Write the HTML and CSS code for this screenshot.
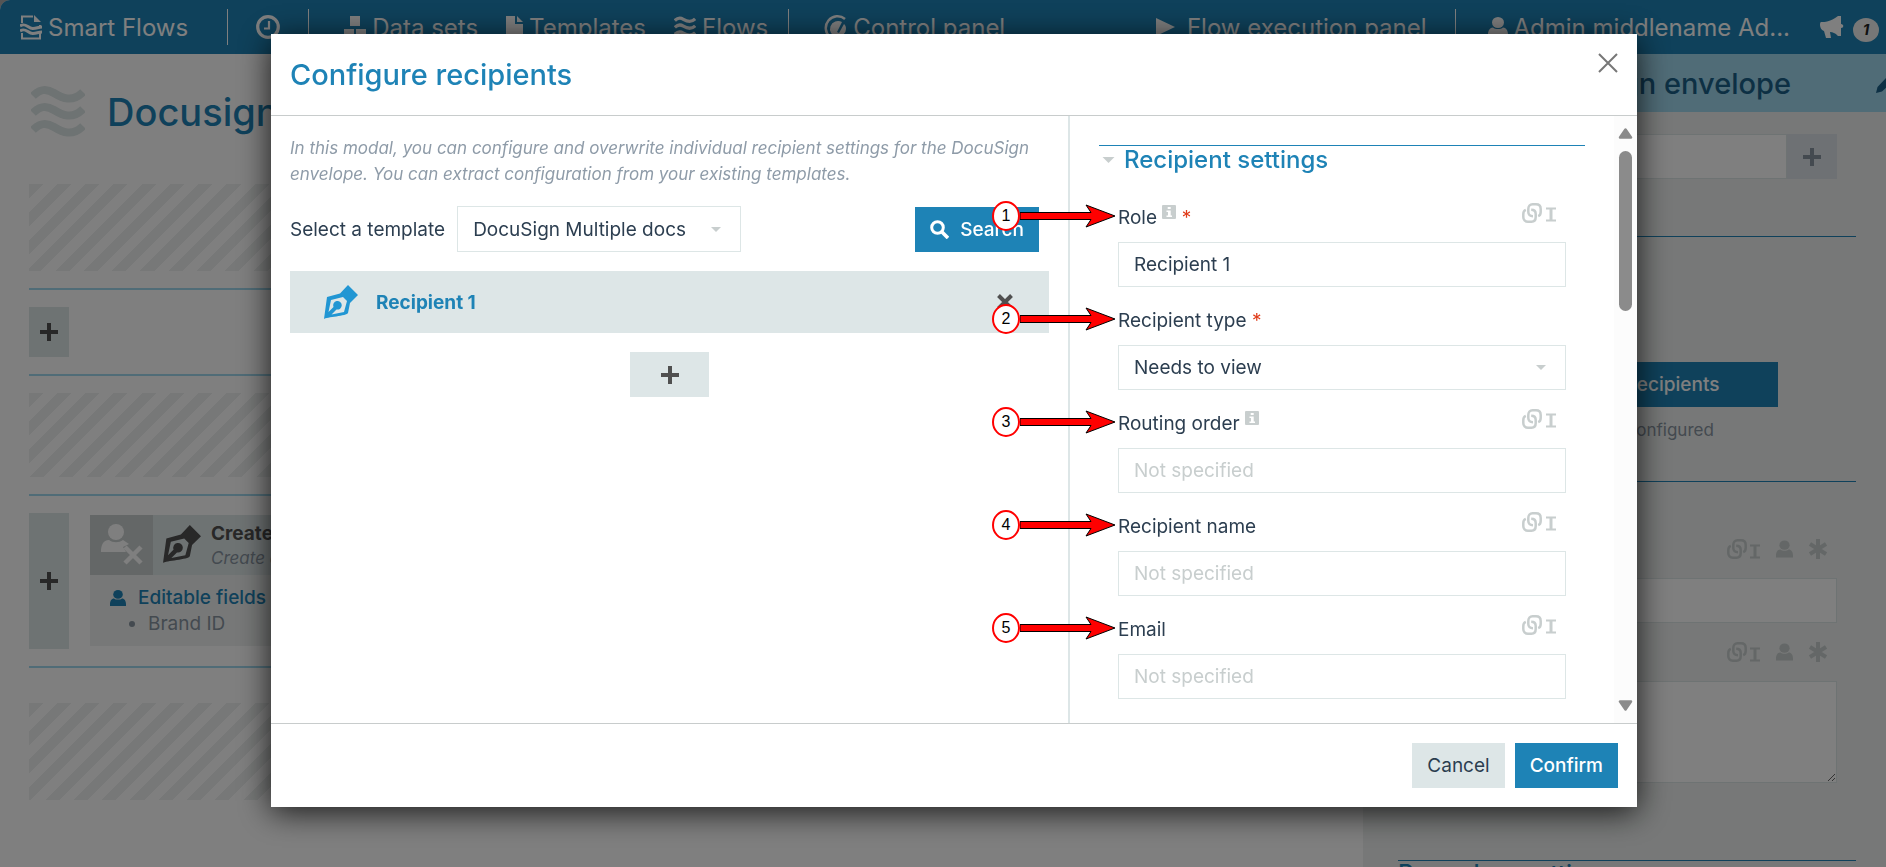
FILE: index.html
```
<!DOCTYPE html>
<html lang="en">
  <head>
    <meta charset="utf-8" />
    <title>Smart Flows - Configure recipients</title>
    <link rel="stylesheet" href="styles.css">
  </head>
  <body>
    <!-- icon sprite -->
    <svg class="sprite" aria-hidden="true">
      <symbol id="i-logo" viewBox="0 0 22 25">
        <path d="M2 8V1.500H13M2 18V23.500H20V18M20 12V10" fill="none" stroke="currentColor" stroke-width="2" />
        <path d="M14 0l7 7h-7z" fill="currentColor" />
        <path d="M0 11c6-4 8 3 13 2.500 4 0 5-1.500 9-1.500M0 16c6-4 8 3 13 2.500 4 0 5-1.500 9-1.500" fill="none" stroke="currentColor" stroke-width="3" />
      </symbol>
      <symbol id="i-clock" viewBox="0 0 24 24">
        <circle cx="12" cy="12" r="10.300" fill="none" stroke="currentColor" stroke-width="3.200" />
        <path d="M13 6v7.500H8" fill="none" stroke="currentColor" stroke-width="2.200" />
      </symbol>
      <symbol id="i-cubes" viewBox="0 0 22 22">
        <path d="M6 0h10v10H6zM0 13h10v9H0zM12 13h10v9H12z" fill="currentColor" />
      </symbol>
      <symbol id="i-file" viewBox="0 0 17 22">
        <path d="M0 0h9v8h8v14H0zM11 0l6 6h-6z" fill="currentColor" />
      </symbol>
      <symbol id="i-waves" viewBox="0 0 54 50">
        <path d="M2 9C9 2 15 1 23 6s18 10 29-1M2 26c7-7 13-8 21-3s18 10 29-1M2 43c7-7 13-8 21-3s18 10 29-1" fill="none" stroke="currentColor" stroke-width="8" />
      </symbol>
      <symbol id="i-gauge" viewBox="0 0 24 24">
        <path d="M7 22A10.500 10.500 0 1 1 22 4" fill="none" stroke="currentColor" stroke-width="2.500" />
        <path d="M19 7a8 8 0 1 0 4 7c0-3-1-4-2-5l-5 9-2-1z" fill="currentColor" />
      </symbol>
      <symbol id="i-play" viewBox="0 0 19 18">
        <path d="M0 0l19 9-19 9z" fill="currentColor" />
      </symbol>
      <symbol id="i-user" viewBox="0 0 20 20">
        <ellipse cx="10" cy="5.500" rx="6" ry="5.500" fill="currentColor" />
        <path d="M5 10.500c2 2 8 2 10 0 3 0 5 3 5 7V20H0v-2.500c0-4 2-7 5-7z" fill="currentColor" />
      </symbol>
      <symbol id="i-horn" viewBox="0 0 24 22">
        <path d="M1 6c4 0 9 0 17-6h3v8c3 0 3 4 0 4v8h-3c-3-3-5-4-8-4l1 6H6L4 15C0 14-1 7 1 6z" fill="currentColor" />
      </symbol>
      <symbol id="i-pencil" viewBox="0 0 20 20">
        <path d="M0 20l1.500-6L12 3l5 5L6 18.500zM13 2l2-2 5 5-2 2z" fill="currentColor" />
      </symbol>
      <symbol id="i-plus" viewBox="0 0 18 18">
        <path d="M9 0v18M0 9h18" stroke="currentColor" stroke-width="4" />
      </symbol>
      <symbol id="i-nouser" viewBox="0 0 42 42">
        <ellipse cx="15" cy="8" rx="8" ry="8" fill="currentColor" />
        <path d="M8 16c4 3 10 3 14 0l6 4-6 3 3 5H0c0-7 2-12 8-12z" fill="currentColor" />
        <path d="M24 23l16 16M40 23L24 39" stroke="currentColor" stroke-width="4.500" />
      </symbol>
      <symbol id="i-pen" viewBox="0 0 34 34">
        <path fill="currentColor" fill-rule="evenodd" d="M24 0l10 10-8 8-2 10c-1 3-22 4-24 6L3 12l13-3.500zM7 15L4.500 27l5-5a4.300 4.300 0 1 1 3 2.500L7.500 29.500 20 27l3-11-4-4z" />
      </symbol>
      <symbol id="i-search" viewBox="0 0 19 19">
        <circle cx="7.500" cy="7.500" r="5.800" fill="none" stroke="currentColor" stroke-width="3" />
        <path d="M11.500 11.500l6.500 6.500" stroke="currentColor" stroke-width="3.600" />
      </symbol>
      <symbol id="i-remove" viewBox="0 0 16 16">
        <path d="M1.500 1.500l13 13M14.500 1.500l-13 13" stroke="currentColor" stroke-width="4" />
      </symbol>
      <symbol id="i-close" viewBox="0 0 20 20">
        <path d="M1 1l18 18M19 1L1 19" stroke="currentColor" stroke-width="2" />
      </symbol>
      <symbol id="i-info" viewBox="0 0 14 14">
        <rect width="14" height="14" rx="1" fill="currentColor" />
        <path d="M5.700 2h3v2h-3zM4.500 5.500h4.200v5H10V12H4.500v-1.500H6V7H4.500z" fill="#fff" />
      </symbol>
      <symbol id="i-link" viewBox="0 0 20 20">
        <g fill="none" stroke="currentColor" stroke-width="2.500">
          <path d="M11 13.200C8 13.200 6.300 11.500 6.300 9V6C6.300 3 8 1.300 10.500 1.300H14c3 0 4.700 1.700 4.700 4.700V9c0 2-.700 3.500-2.500 4.200" />
          <path d="M9.200 6.800C12 6.800 13.700 8.500 13.700 11v3c0 3-1.700 4.700-4.200 4.700H6C3 18.700 1.300 17 1.300 14v-3c0-2 .700-3.500 2.500-4.200" />
        </g>
      </symbol>
      <symbol id="i-text" viewBox="0 0 10 15">
        <path d="M0 1.500h10M0 13.500h10" stroke="currentColor" stroke-width="2.200" />
        <path d="M5 1v13" stroke="currentColor" stroke-width="3" />
      </symbol>
      <symbol id="i-star" viewBox="0 0 18 20">
        <path d="M9 0v20M1 5l16 10M17 5L1 15" stroke="currentColor" stroke-width="4" />
      </symbol>
      <symbol id="i-down" viewBox="0 0 10 5">
        <path d="M0 0h10L5 5z" fill="currentColor" />
      </symbol>
      <symbol id="i-scroll" viewBox="0 0 15 11">
        <path d="M7.500 1.500l5.500 8H2z" fill="currentColor" stroke="currentColor" stroke-width="2.500" stroke-linejoin="round" />
      </symbol>
      <symbol id="i-arrow" viewBox="0 0 96 24">
        <path d="M0 8.500h71L66 1l29 11-29 11 5-7.500H0z" fill="#f00" stroke="#000" />
      </symbol>
    </svg>

    <div class="app">
      <header class="topbar">
        <a class="brand" href="#"><svg class="ic-logo"><use href="#i-logo" /></svg>Smart Flows</a>
        <a class="recent" href="#" aria-label="Recent"><svg class="ic-clock"><use href="#i-clock" /></svg></a>
        <nav class="menu">
          <a href="#"><svg class="ic-22"><use href="#i-cubes" /></svg>Data sets</a>
          <a href="#"><svg class="ic-file"><use href="#i-file" /></svg>Templates</a>
          <a href="#"><svg class="ic-22"><use href="#i-waves" /></svg>Flows</a>
        </nav>
        <a class="control" href="#"><svg class="ic-clock"><use href="#i-gauge" /></svg>Control panel</a>
        <a class="execution" href="#"><svg class="ic-play"><use href="#i-play" /></svg>Flow execution panel</a>
        <a class="account" href="#"><svg class="ic-user"><use href="#i-user" /></svg>Admin middlename Ad...</a>
        <a class="news" href="#" aria-label="News"><svg class="ic-clock"><use href="#i-horn" /></svg><span class="badge">1</span></a>
      </header>

      <div class="workspace">
        <main class="flow">
          <div class="flow-title">
            <svg><use href="#i-waves" /></svg>
            <h1>Docusign</h1>
          </div>
          <div class="lane-empty first"></div>
          <div class="lane"><button class="add" aria-label="Add step"><svg class="ic-plus"><use href="#i-plus" /></svg></button></div>
          <div class="lane"><div class="lane-empty"></div></div>
          <div class="lane">
            <button class="add" aria-label="Add step"><svg class="ic-plus"><use href="#i-plus" /></svg></button>
            <div class="step">
              <div class="step-head">
                <span class="step-user"><svg><use href="#i-nouser" /></svg></span>
                <svg class="step-pen"><use href="#i-pen" /></svg>
                <div>
                  <b>Create envelope</b>
                  <i>Create envelope</i>
                </div>
              </div>
              <div class="step-fields">
                <a href="#"><svg><use href="#i-user" /></svg>Editable fields</a>
                <ul><li>Brand ID</li></ul>
              </div>
            </div>
          </div>
          <div class="lane last"><div class="lane-empty"></div></div>
        </main>

        <aside class="panel">
          <div class="panel-head">
            <h2>Create DocuSign envelope</h2>
            <svg><use href="#i-pencil" /></svg>
          </div>
          <section class="panel-files">
            <div class="file-row">
              <input type="text" aria-label="Documents">
              <button aria-label="Add document"><svg class="ic-plus"><use href="#i-plus" /></svg></button>
            </div>
          </section>
          <section class="panel-recipients">
            <button class="primary">Configure recipients</button>
            <p>1 recipient configured</p>
          </section>
          <section class="panel-email">
            <div class="tools">
              <svg class="ic-link"><use href="#i-link" /></svg><svg class="ic-text"><use href="#i-text" /></svg><svg class="ic-man"><use href="#i-user" /></svg><svg class="ic-star"><use href="#i-star" /></svg>
            </div>
            <input type="text" aria-label="Email subject">
            <div class="tools">
              <svg class="ic-link"><use href="#i-link" /></svg><svg class="ic-text"><use href="#i-text" /></svg><svg class="ic-man"><use href="#i-user" /></svg><svg class="ic-star"><use href="#i-star" /></svg>
            </div>
            <textarea aria-label="Email body"></textarea>
          </section>
          <section class="panel-procedure">
            <h3>Procedure settings</h3>
          </section>
        </aside>
      </div>
    </div>

    <div class="overlay">
      <div class="modal" role="dialog" aria-labelledby="modal-title">
        <div class="modal-header">
          <h2 id="modal-title">Configure recipients</h2>
          <button class="close" aria-label="Close"><svg><use href="#i-close" /></svg></button>
        </div>

        <div class="modal-body">
          <div class="recipients">
            <p class="hint">In this modal, you can configure and overwrite individual recipient settings for the DocuSign envelope. You can extract configuration from your existing templates.</p>
            <div class="toolbar">
              <label for="template">Select a template</label>
              <div class="select template">
                <select id="template"><option>DocuSign Multiple docs</option></select>
                <svg><use href="#i-down" /></svg>
              </div>
              <button class="primary search"><svg><use href="#i-search" /></svg>Search</button>
            </div>
            <div class="recipient">
              <svg class="recipient-pen"><use href="#i-pen" /></svg>
              <b>Recipient 1</b>
              <button aria-label="Remove recipient"><svg><use href="#i-remove" /></svg></button>
            </div>
            <button class="add-recipient" aria-label="Add recipient"><svg class="ic-plus"><use href="#i-plus" /></svg></button>
          </div>

          <div class="settings">
            <div class="settings-form">
              <h3><svg><use href="#i-down" /></svg>Recipient settings</h3>
              <div class="field">
                <div class="field-head">
                  <label for="role">Role <svg class="info"><use href="#i-info" /></svg> <span class="req">*</span></label>
                  <span class="field-tools"><svg class="ic-link"><use href="#i-link" /></svg><svg class="ic-text"><use href="#i-text" /></svg></span>
                </div>
                <input type="text" id="role" value="Recipient 1">
              </div>
              <div class="field">
                <div class="field-head">
                  <label for="type">Recipient type <span class="req">*</span></label>
                </div>
                <div class="select">
                  <select id="type"><option>Needs to view</option></select>
                  <svg><use href="#i-down" /></svg>
                </div>
              </div>
              <div class="field">
                <div class="field-head">
                  <label for="order">Routing order <svg class="info"><use href="#i-info" /></svg></label>
                  <span class="field-tools"><svg class="ic-link"><use href="#i-link" /></svg><svg class="ic-text"><use href="#i-text" /></svg></span>
                </div>
                <input type="text" id="order" placeholder="Not specified">
              </div>
              <div class="field">
                <div class="field-head">
                  <label for="name">Recipient name</label>
                  <span class="field-tools"><svg class="ic-link"><use href="#i-link" /></svg><svg class="ic-text"><use href="#i-text" /></svg></span>
                </div>
                <input type="text" id="name" placeholder="Not specified">
              </div>
              <div class="field">
                <div class="field-head">
                  <label for="email">Email</label>
                  <span class="field-tools"><svg class="ic-link"><use href="#i-link" /></svg><svg class="ic-text"><use href="#i-text" /></svg></span>
                </div>
                <input type="text" id="email" placeholder="Not specified">
              </div>
            </div>
            <div class="scrollbar" aria-hidden="true">
              <svg><use href="#i-scroll" /></svg>
              <span class="thumb"></span>
              <svg class="down"><use href="#i-scroll" /></svg>
            </div>
          </div>

          <!-- numbered callouts -->
          <div class="callouts">
            <div class="callout"><span>1</span><svg><use href="#i-arrow" /></svg></div>
            <div class="callout"><span>2</span><svg><use href="#i-arrow" /></svg></div>
            <div class="callout"><span>3</span><svg><use href="#i-arrow" /></svg></div>
            <div class="callout"><span>4</span><svg><use href="#i-arrow" /></svg></div>
            <div class="callout"><span>5</span><svg><use href="#i-arrow" /></svg></div>
          </div>
        </div>

        <div class="modal-footer">
          <button class="secondary">Cancel</button>
          <button class="primary">Confirm</button>
        </div>
      </div>
    </div>
  </body>
</html>
```
FILE: styles.css
```
* {
  box-sizing: border-box;
}

body {
  margin: 0;
  height: 100vh;
  overflow: hidden;
  font-family: Inter, "Liberation Sans", sans-serif;
  font-size: 19px;
  color: #2c3e50;
  background-color: #aaa;
}

h1,
h2,
h3 {
  margin: 0;
  font-weight: 500;
}

p,
ul {
  margin: 0;
}

a {
  color: inherit;
  text-decoration: none;
}

button,
input,
select,
textarea {
  font: inherit;
  color: inherit;
  border: none;
  border-radius: 0;
  margin: 0;
}

button {
  padding: 0;
  cursor: pointer;
}

svg {
  flex: none;
}

.sprite {
  display: none;
}

input,
select,
textarea {
  width: 100%;
  height: 45px;
  padding: 0 15px;
  border: 1px solid #dde6e6;
  background-color: #fff;
}

input::placeholder {
  color: #c8cece;
  opacity: 1;
}

.primary,
.secondary {
  height: 45px;
  padding: 0 15px;
  background-color: #1e83b6;
  color: #fff;
  font-weight: 500;
}

.secondary {
  background-color: #dde6e7;
  color: #2c3e50;
  font-weight: 400;
}

.ic-logo { width: 22px; height: 25px; }
.ic-clock { width: 24px; height: 24px; }
.ic-22 { width: 22px; height: 22px; }
.ic-file { width: 17px; height: 22px; }
.ic-play { width: 19px; height: 18px; }
.ic-user { width: 20px; height: 22px; }
.ic-plus { width: 18px; height: 18px; }
.ic-link { width: 20px; height: 20px; }
.ic-text { width: 10px; height: 15px; }
.ic-man { width: 17px; height: 18px; }
.ic-star { width: 18px; height: 20px; }

/* page behind the modal */
.app {
  height: 100vh;
  display: flex;
  flex-direction: column;
  overflow: hidden;
  border-top-left-radius: 10px;
  background-color: #fff;
}

.topbar {
  flex: none;
  display: flex;
  align-items: center;
  height: 54px;
  padding: 0 7px 0 20px;
  background-color: #1e83b6;
  color: #fff;
  font-size: 24px;
  white-space: nowrap;
}

.topbar a {
  display: flex;
  align-items: center;
  gap: 6px;
}

.topbar .recent,
.topbar .control,
.topbar .account {
  height: 36px;
  border-left: 1px solid #fff;
}

.topbar .recent {
  margin-left: 39px;
  padding: 0 28px;
}

.menu {
  display: flex;
  align-items: center;
  gap: 28px;
  height: 36px;
  padding: 0 20px 0 35px;
  border-left: 1px solid #fff;
}

.topbar .control {
  padding-left: 34px;
}

.topbar .execution {
  gap: 12px;
  margin-left: auto;
  margin-right: 28px;
}

.topbar .account {
  padding-left: 32px;
}

.topbar .news {
  margin-left: 30px;
  gap: 9px;
}

.badge {
  width: 26px;
  height: 24px;
  margin-top: 6px;
  border-radius: 50%;
  background-color: #eee;
  color: #222;
  font-size: 15px;
  line-height: 24px;
  font-weight: 700;
  font-style: italic;
  text-align: center;
}

.workspace {
  flex: 1;
  display: flex;
  min-height: 0;
}

.flow {
  flex: 1;
  min-width: 0;
  padding: 29px 29px 0;
}

.flow-title {
  display: flex;
  align-items: center;
  gap: 22px;
  height: 57px;
  color: #1e83b6;
}

.flow-title svg {
  width: 54px;
  height: 52px;
  margin-left: 2px;
  color: #dde6e6;
}

.flow-title h1 {
  font-size: 38px;
}

.lane-empty {
  flex: 1;
  height: 84px;
  background: repeating-linear-gradient(135deg, #eef1f0 0 10px, #fff 10px 20px);
}

.lane-empty.first {
  height: 87px;
  margin: 44px 0 17px;
}

.last .lane-empty {
  height: 97px;
  margin-top: 18px;
}

.lane {
  display: flex;
  gap: 21px;
  padding: 17px 0;
  border-top: 2px solid #a0d8ee;
}

.add {
  width: 40px;
  min-height: 50px;
  background-color: #dde6e7;
  color: #505050;
}

.step {
  flex: 1;
  margin: 2px 0 3px;
  background-color: #eef1f0;
}

.step-head {
  display: flex;
  height: 60px;
  background-color: #dde6e7;
}

.step-user {
  display: flex;
  align-items: center;
  justify-content: center;
  width: 63px;
  color: #fff;
  background-color: #c8cece;
}

.step-user svg {
  width: 42px;
  height: 42px;
}

.step-pen {
  width: 38px;
  height: 38px;
  margin: 10px 10px 0;
  color: #505050;
}

.step-head b,
.step-head i {
  display: block;
  line-height: 24px;
}

.step-head b {
  padding-top: 7px;
  color: #505050;
}

.step-head i {
  font-size: 17px;
  color: #8894a0;
}

.step-fields {
  padding: 10px 0 9px 20px;
  line-height: 26px;
}

.step-fields a {
  display: flex;
  align-items: center;
  gap: 12px;
  color: #1e83b6;
  font-weight: 500;
}

.step-fields svg {
  width: 16px;
  height: 18px;
}

.step-fields ul {
  padding-left: 38px;
  color: #8894a0;
}

.panel {
  width: 523px;
  overflow: hidden;
  background-color: #eef1f0;
}

.panel-head {
  display: flex;
  align-items: center;
  justify-content: flex-end;
  height: 58px;
  margin-right: -10px;
  background-color: #a0d8ee;
  color: #1a6088;
}

.panel-head h2 {
  font-size: 29px;
}

.panel-head svg {
  width: 20px;
  height: 20px;
  margin-left: 85px;
}

.panel section {
  margin: 0 30px 0 35px;
  padding-right: 19px;
  border-top: 1px solid #1e83b6;
}

.panel .panel-files {
  padding-top: 21px;
  padding-bottom: 57px;
  border-color: transparent;
}

.file-row {
  display: flex;
}

.file-row button {
  flex: none;
  width: 50px;
  background-color: #dde3e8;
  color: #8894a0;
}

.panel .panel-recipients {
  padding: 125px 0 27px;
  text-align: center;
}

.panel-recipients .primary {
  width: 302px;
}

.panel-recipients p {
  font-size: 17px;
  line-height: 47px;
  color: #8894a0;
}

.panel-email {
  padding-top: 38px;
  padding-bottom: 77px;
}

.tools {
  display: flex;
  align-items: center;
  justify-content: flex-end;
  height: 58px;
  padding-right: 10px;
  color: #c8cece;
}

.tools .ic-text {
  margin: 4px 16px 0 3px;
}

.tools .ic-star {
  margin-left: 16px;
}

.panel-email textarea {
  display: block;
  height: 102px;
}

.panel-procedure h3 {
  font-size: 24px;
  line-height: 26px;
  color: #1e83b6;
}

/* modal */
.overlay {
  position: fixed;
  inset: 0;
  display: flex;
  justify-content: center;
  align-items: flex-start;
  padding: 34px 0 60px 22px;
  background-color: rgba(0, 0, 0, 0.5);
}

.modal {
  width: 1366px;
  max-width: 96%;
  background-color: #fff;
  box-shadow: 0 5px 30px rgba(0, 0, 0, 0.8);
}

.modal-header {
  display: flex;
  justify-content: space-between;
  height: 82px;
  padding: 19px 19px 0;
  border-bottom: 1px solid #c8cccc;
}

.modal-header h2 {
  font-size: 29px;
  line-height: 44px;
  color: #1e83b6;
}

.close {
  display: flex;
  height: 20px;
  background: none;
  color: #777;
}

.close svg {
  width: 20px;
  height: 20px;
}

.modal-body {
  position: relative;
  display: flex;
  height: calc(100vh - 260px);
}

.recipients {
  flex: 1;
  padding: 19px;
  display: flex;
  flex-direction: column;
  gap: 19px;
}

.hint {
  font-size: 17px;
  line-height: 26px;
  font-style: italic;
  color: #8e9ba8;
}

.toolbar {
  display: flex;
  align-items: center;
  gap: 12px;
}

.select {
  display: grid;
  align-items: center;
}

.select select,
.select svg {
  grid-area: 1 / 1;
}

.select select {
  appearance: none;
}

.select svg {
  justify-self: end;
  width: 10px;
  height: 5px;
  margin-right: 20px;
  color: #c8cece;
  pointer-events: none;
}

.template {
  width: 284px;
}

.template select {
  height: 46px;
}

.search {
  display: flex;
  align-items: center;
  align-self: flex-end;
  gap: 11px;
  margin-left: auto;
  margin-right: 10px;
}

.search svg {
  width: 19px;
  height: 19px;
}

.recipient {
  display: flex;
  align-items: center;
  height: 62px;
  padding: 0 36px 0 34px;
  background-color: #dde6e7;
  color: #1e83b6;
}

.recipient-pen {
  width: 34px;
  height: 34px;
  margin-right: 18px;
  color: #2196d3;
}

.recipient button {
  display: flex;
  margin-left: auto;
  background: none;
  color: #505050;
}

.recipient button svg {
  width: 16px;
  height: 16px;
}

.add-recipient {
  align-self: center;
  width: 79px;
  height: 45px;
  background-color: #dde6e7;
  color: #505050;
}

.add,
.add-recipient,
.file-row button {
  display: flex;
  align-items: center;
  justify-content: center;
}

.settings {
  flex: none;
  display: flex;
  width: 569px;
  border-left: 2px solid #dde6e7;
}

.settings-form {
  flex: 1;
  padding: 29px 29px 0 29px;
}

.settings h3 {
  display: flex;
  align-items: center;
  gap: 9px;
  margin-bottom: 10px;
  padding-left: 3px;
  border-top: 1px solid #1e83b6;
  font-size: 24px;
  line-height: 28px;
  color: #1e83b6;
}

.settings h3 svg {
  width: 13px;
  height: 6px;
  color: #c8cece;
}

.field {
  padding: 0 19px;
}

.field-head {
  display: flex;
  justify-content: space-between;
  align-items: flex-end;
  height: 58px;
}

.field-head label {
  line-height: 48px;
}

.info {
  width: 14px;
  height: 14px;
  margin-bottom: 5px;
  color: #c8cece;
}

.req {
  color: #e03c1a;
}

.field-tools {
  display: flex;
  align-items: center;
  gap: 4px;
  padding: 0 10px 19px 0;
  color: #c8cece;
}

.field-tools .ic-text {
  margin-top: 3px;
}

.scrollbar {
  display: flex;
  flex-direction: column;
  align-items: center;
  width: 23px;
  padding: 12px 0;
  background-color: #fcfcfc;
  color: #8b8b8b;
}

.scrollbar svg {
  width: 15px;
  height: 11px;
}

.scrollbar .down {
  margin-top: auto;
  transform: rotate(180deg);
}

.thumb {
  width: 13px;
  height: 160px;
  margin-top: 12px;
  border-radius: 7px;
  background-color: #8b8b8b;
}

.callouts {
  position: absolute;
  top: 85px;
  right: 521px;
  display: flex;
  flex-direction: column;
  gap: 73px;
}

.callout {
  display: flex;
  align-items: center;
  height: 30px;
}

.callout span {
  width: 28px;
  height: 30px;
  border: 2px solid #f00;
  border-radius: 50%;
  background-color: #fff;
  color: #000;
  font-family: "Liberation Sans", sans-serif;
  font-size: 16px;
  line-height: 26px;
  text-align: center;
}

.callout svg {
  width: 96px;
  height: 24px;
}

.modal-footer {
  display: flex;
  justify-content: flex-end;
  gap: 10px;
  padding: 19px;
  border-top: 1px solid #c8cccc;
}
```
